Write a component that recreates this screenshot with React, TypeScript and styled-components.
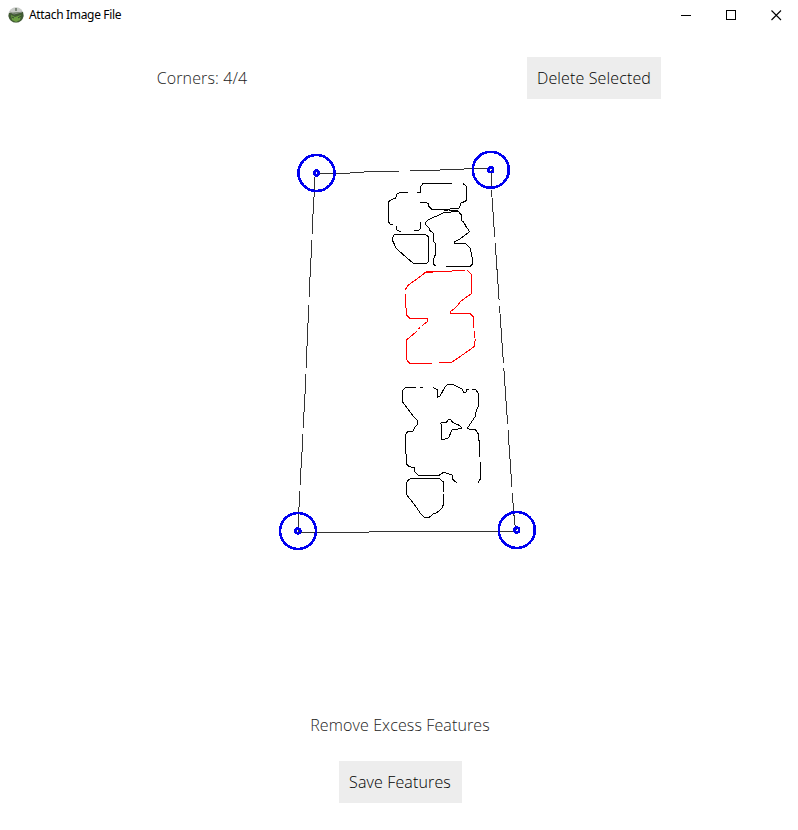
import React from "react";
import styled, { createGlobalStyle } from "styled-components";

const GlobalStyle = createGlobalStyle`
  body { margin: 0; background: #fff; }
  * { box-sizing: border-box; }
`;

const Window = styled.main`
  width: 798px;
  height: 830px;
  display: flex;
  flex-direction: column;
  overflow: hidden;
  background: #fff;
  font-family: "Open Sans", sans-serif;
`;

const TitleBar = styled.header`
  height: 30px;
  display: flex;
  align-items: center;
  padding-left: 8px;
  flex: none;
`;

const AppIcon = styled.svg`
  width: 16px;
  height: 16px;
  margin-right: 5px;
`;

const Title = styled.h1`
  flex: 1;
  margin: 0;
  font: 400 12px/16px "Noto Sans", sans-serif;
  letter-spacing: -0.33px;
  color: #000;
`;

const WindowControl = styled.button<{ $width: number }>`
  width: ${(p) => p.$width}px;
  height: 30px;
  padding: 0;
  border: 0;
  background: none;
  display: flex;
  align-items: center;
  justify-content: center;
`;

const Toolbar = styled.div`
  height: 42px;
  margin-top: 27px;
  padding: 0 8px 0 6px;
  display: grid;
  grid-template-columns: 1fr 1fr;
  place-items: center;
  flex: none;
`;

const Label = styled.span`
  font-size: 16px;
  line-height: 22px;
  font-weight: 300;
  letter-spacing: 0.12px;
  color: #222;
`;

const Button = styled.button<{ $width: number }>`
  width: ${(p) => p.$width}px;
  height: 42px;
  padding: 0;
  border: 0;
  background: #ededed;
  font: 300 16px/22px "Open Sans", sans-serif;
  letter-spacing: 0.14px;
  white-space: nowrap;
  color: #000;
`;

const Canvas = styled.svg`
  display: block;
  width: 798px;
  height: 601px;
  flex: none;
`;

const Footer = styled.footer`
  display: flex;
  flex-direction: column;
  align-items: center;
  padding: 14px 0 0 2px;
  gap: 25px;
`;

/* Contours are traced on a grid three times finer than the canvas. */
type Trace = { x: number; y: number; d: string; color?: string };

const traces: Trace[] = [
  { x: 380, y: 175, d: "M111 52H122V34L129 26H216M249 26L259 33V77L240 86V94L235 101H211L203 106H192M120 82H137L145 86L147 95L155 103H203L211 107H234" },
  { x: 380, y: 175, d: "M84 52H61L50 57L47 69L34 74L26 80V141L30 148L39 150M49 152V162L52 166L63 170M102 166H117L122 160V140" },
  { x: 380, y: 175, d: "M42 179H137L146 186V260L139 265H100L49 221L38 197V188L42 179" },
  { x: 380, y: 175, d: "M191 113L235 109L243 119V136L250 140L258 154L269 170L238 193L223 201V206H257L270 218L277 250V267L271 274H198M167 274L161 267V252L166 239V206L160 198V175L149 166L147 158L137 149V142L145 134L170 123L191 113" },
  { x: 395, y: 262, color: "#ff0000", d: "M115 29H94L74 45L40 69L31 83M32 97V128L35 159L45 169H98V178L82 190M75 196L70 201M67 207L35 233V293L43 303L61 306L113 303M132 300H171L205 277L237 254L241 231M238 227V206M235 197V164L225 154H166V149L184 135L197 118L230 94V37L217 25M209 25L94 31" },
  { x: 395, y: 375, d: "M32 224V178L37 171L55 168L60 155L67 149V136L51 119L23 81V46L32 38H63M75 38H84M114 38L126 43V67L134 65L151 34L157 29L178 30L202 43L207 54L213 52L216 43H223M231 44H242L250 55V94L241 115V124L217 160L225 163L242 165L249 175L253 203V224" },
  { x: 395, y: 375, d: "M137 143L155 141L159 134H167L174 143L195 152L200 160L170 165L162 187L157 191L139 194V153L137 143" },
  { x: 395, y: 445, d: "M32 0V25L35 29V58L41 64L59 69V79L69 90H134L146 82L156 85L172 90V102L180 109L186 113M253 0V36M256 50V102L249 113" },
  { x: 395, y: 445, d: "M50 99H131L145 111V140M145 148V179L140 191L124 204L117 205L104 216H88L79 209L60 181L35 149V112L41 104L50 99" },
];

const edges = [
  "M317 173.5H336L364 172.5M364 171.5H399M410 170.5H440M440 169.5H464M464 168.5H491",
  "M491.5 170V186M491.5 190L494.7 237M495.2 243L499.1 300M499.5 306L503.4 363M503.8 368L507.6 424M508 430L511.9 487M512.3 493L513.5 510L514.8 524L516.5 530",
  "M298 532.5H369M369 531.5H517",
  "M314.5 177V197M313.5 197V214M312.5 214V234M311.5 240V258M310.5 258V277M309.5 277V297M308.5 305V323M307.5 323V346M306.5 346V368M305.5 374V394M304.5 394V412M303.5 412V428M302.5 434V452M301.5 452V468M300.5 468V485M299.5 491V507M298.5 507V532",
];

const corners = [
  [316.5, 173],
  [490.8, 169.8],
  [298, 531],
  [516.8, 530],
];

export default function App() {
  return (
    <>
      <GlobalStyle />
      <Window>
        <TitleBar>
          <AppIcon viewBox="0 0 16 16">
            <circle cx="8" cy="8" r="7.7" fill="#c9ccc8" />
            <path d="M1 6L15 5L15.6 9A7.7 7.7 0 0 1 .4 9Z" fill="#405a33" />
            <path d="M3 8L7 10L13 8L12 13L8 15L4 13Z" fill="#6b9e42" />
            <path d="M2 5L6 7L10 6L14 5" stroke="#8d928b" fill="none" />
            <path d="M8 1V4M4 10L6 11M10 11L13 9" stroke="#344631" fill="none" />
          </AppIcon>
          <Title>Attach Image File</Title>
          <WindowControl $width={43} aria-label="Minimize">
            <svg width="11" height="11" shapeRendering="crispEdges"><path d="M0 5.5H10" stroke="#000" /></svg>
          </WindowControl>
          <WindowControl $width={46} aria-label="Maximize">
            <svg width="11" height="11" shapeRendering="crispEdges"><rect x=".5" y=".5" width="9" height="9" fill="none" stroke="#000" /></svg>
          </WindowControl>
          <WindowControl $width={44} aria-label="Close">
            <svg width="11" height="11"><path d="M.5 .5L10 10M10 .5L.5 10" stroke="#000" strokeWidth="1.1" /></svg>
          </WindowControl>
        </TitleBar>
        <Toolbar>
          <Label>Corners: 4/4</Label>
          <Button $width={134}>Delete Selected</Button>
        </Toolbar>
        <Canvas viewBox="0 99 798 601" fill="none" shapeRendering="crispEdges">
          {edges.map((d) => <path key={d} d={d} stroke="#333" />)}
          {traces.map((t) => (
            <path
              key={t.d}
              d={t.d}
              transform={`translate(${t.x} ${t.y}) scale(${1 / 3})`}
              stroke={t.color ?? "#000"}
              strokeWidth="3"
            />
          ))}
          {corners.map(([x, y]) => (
            <g key={`${x}-${y}`} stroke="#0000f0" strokeWidth="2.6">
              <circle cx={x} cy={y} r="18" />
              <circle cx={x} cy={y} r="2.4" />
            </g>
          ))}
        </Canvas>
        <Footer>
          <Label>Remove Excess Features</Label>
          <Button $width={123}>Save Features</Button>
        </Footer>
      </Window>
    </>
  );
}
